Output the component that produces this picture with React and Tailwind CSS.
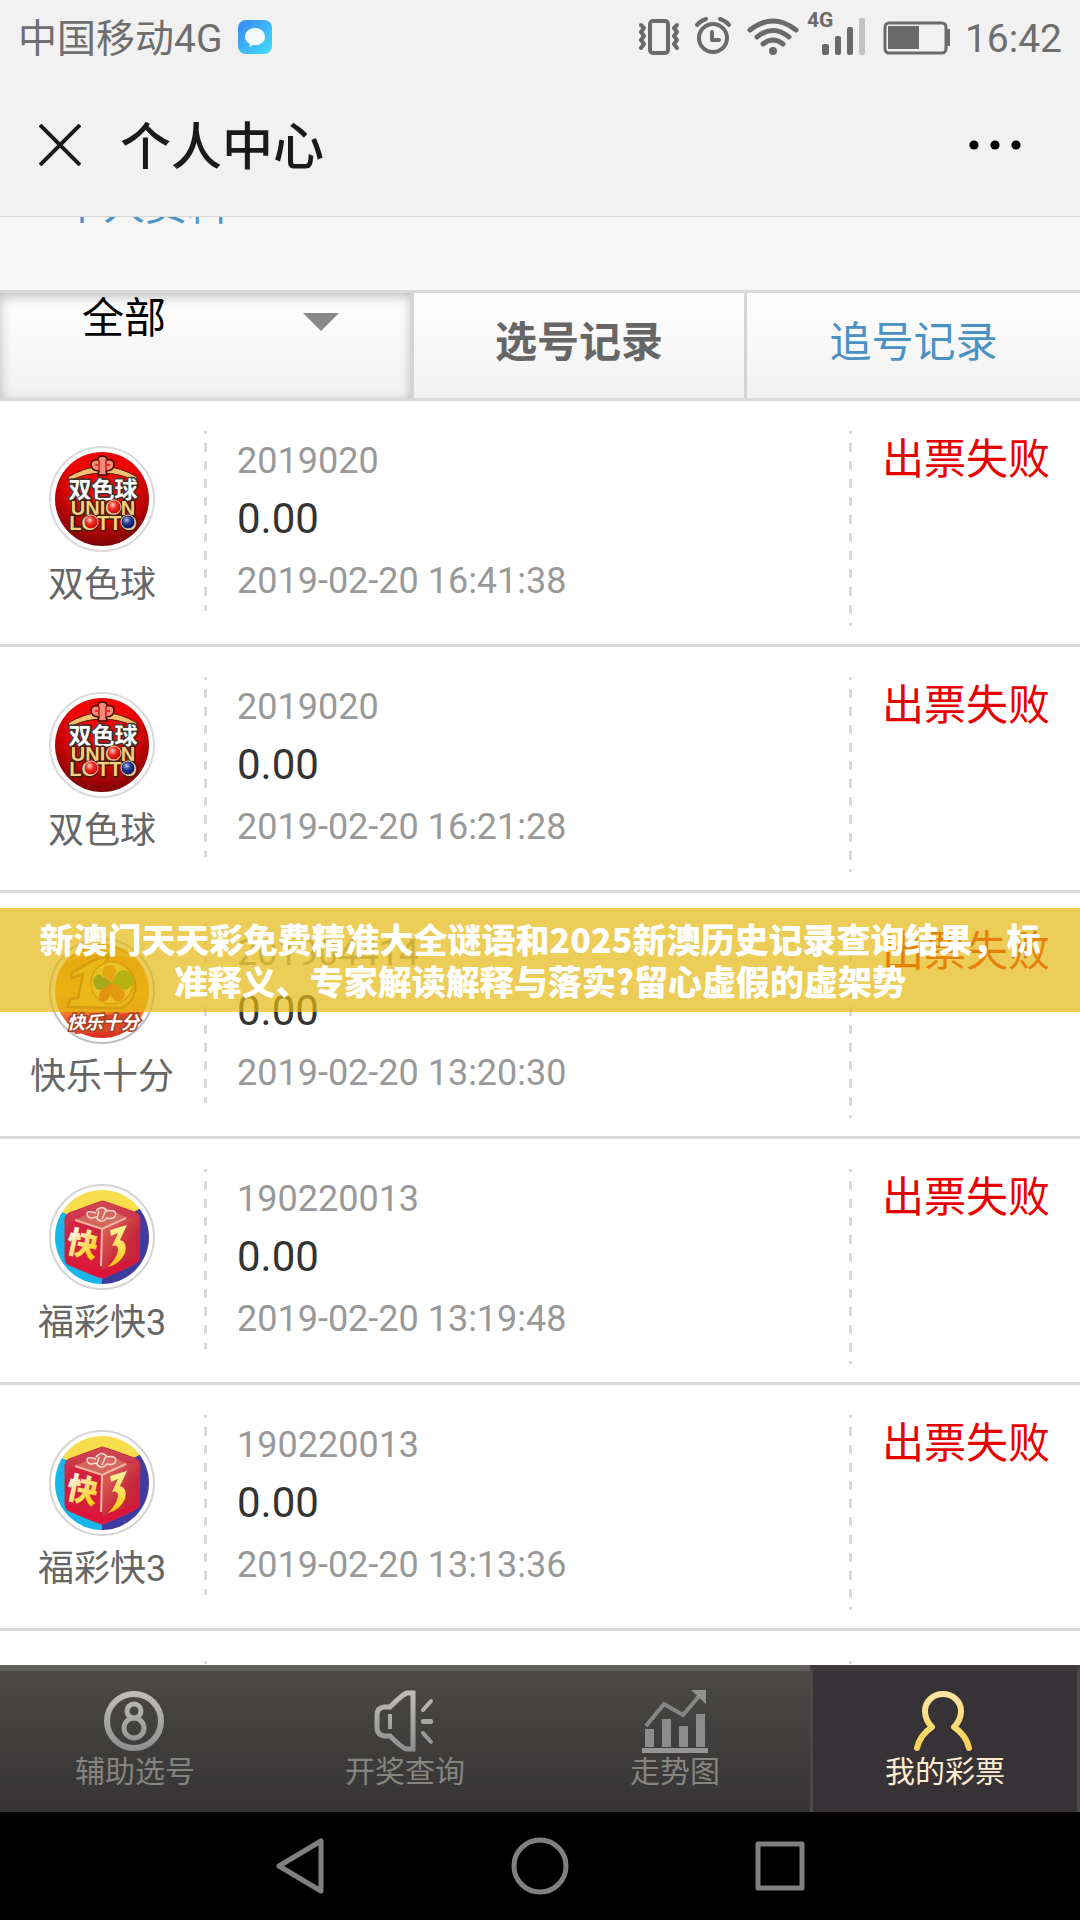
import { useState } from 'react'

const records = [
  { id: 1, game: 'ssq', issue: '2019020', amount: '0.00', time: '2019-02-20 16:41:38', status: '出票失败' },
  { id: 2, game: 'ssq', issue: '2019020', amount: '0.00', time: '2019-02-20 16:21:28', status: '出票失败' },
  { id: 3, game: 'klsf', issue: '201904414', amount: '0.00', time: '2019-02-20 13:20:30', status: '出票失败' },
  { id: 4, game: 'k3', issue: '190220013', amount: '0.00', time: '2019-02-20 13:19:48', status: '出票失败' },
  { id: 5, game: 'k3', issue: '190220013', amount: '0.00', time: '2019-02-20 13:13:36', status: '出票失败' },
]

const games = {
  ssq: { name: '双色球', Logo: UnionLottoLogo },
  klsf: { name: '快乐十分', Logo: HappyTenLogo },
  k3: { name: '福彩快3', Logo: FastThreeLogo },
}

const tabs = [
  { label: '辅助选号', Icon: BallIcon },
  { label: '开奖查询', Icon: SpeakerIcon },
  { label: '走势图', Icon: ChartIcon },
  { label: '我的彩票', Icon: UserIcon },
]

function UnionLottoLogo() {
  return (
    <svg viewBox="0 0 106 106" className="size-[106px]" aria-hidden="true">
      <defs>
        <radialGradient id="ssq-bg" cx="50%" cy="30%" r="75%">
          <stop offset="0.45" stopColor="#ee0505" />
          <stop offset="1" stopColor="#6d0508" />
        </radialGradient>
        <radialGradient id="ssq-red" cx="40%" cy="35%" r="60%">
          <stop offset="0" stopColor="#ffd0c8" />
          <stop offset="0.5" stopColor="#ef2a20" />
          <stop offset="1" stopColor="#c40d0d" />
        </radialGradient>
        <radialGradient id="ssq-blue" cx="40%" cy="35%" r="60%">
          <stop offset="0" stopColor="#b9c4f2" />
          <stop offset="0.5" stopColor="#1f3690" />
          <stop offset="1" stopColor="#0d1d66" />
        </radialGradient>
      </defs>
      <circle cx="53" cy="53" r="52" fill="#fff" stroke="#dcdada" strokeWidth="2" />
      <circle cx="53" cy="53" r="47" fill="url(#ssq-bg)" />
      <path d="M19 31 Q36 21 53 20 Q72 21 88 31 L87 35 Q70 27 53 27 Q37 27 20 35Z" fill="#f3c070" stroke="#5b1608" strokeWidth="1" />
      <path d="M49 29 L50 25 Q42 25 42 18 Q43 13 49 14 Q49 10 53 10 Q58 10 58 14 Q65 13 65 18 Q65 25 57 25 L58 29Z" fill="#f58a78" stroke="#3d0805" strokeWidth="1.5" />
      <path d="M50 14 V25 M57 14 V25 M46 19 H49 M58 19 H61" stroke="#d01818" strokeWidth="1.5" />
      <g paintOrder="stroke" strokeLinejoin="round" textAnchor="middle" fontWeight="700">
        <text x="54" y="52" fontSize="23" fill="#fff" stroke="#3c3634" strokeWidth="3" fontFamily="'Noto Sans CJK SC', sans-serif">双色球</text>
        <g fontFamily="'Liberation Sans', sans-serif" fill="#f5cf80" stroke="#43200f" strokeWidth="3">
          <text x="54" y="69" fontSize="20">UNION</text>
          <text x="54" y="84" fontSize="20">LOTTO</text>
        </g>
      </g>
      <circle cx="65" cy="61" r="7" fill="url(#ssq-red)" stroke="#f3c9a0" strokeWidth="1" />
      <circle cx="42" cy="76" r="7" fill="url(#ssq-red)" stroke="#f3c9a0" strokeWidth="1" />
      <circle cx="79" cy="76" r="7" fill="url(#ssq-blue)" stroke="#e8c9a8" strokeWidth="1" />
    </svg>
  )
}

function HappyTenLogo() {
  return (
    <svg viewBox="0 0 106 106" className="size-[106px]" aria-hidden="true">
      <defs>
        <linearGradient id="klsf-bg" x1="0" y1="0" x2="0" y2="1">
          <stop offset="0" stopColor="#ee7a10" />
          <stop offset="0.5" stopColor="#f9a01a" />
          <stop offset="0.74" stopColor="#ee8024" />
          <stop offset="0.76" stopColor="#ee6a3a" />
          <stop offset="1" stopColor="#dc2a20" />
        </linearGradient>
      </defs>
      <circle cx="53" cy="53" r="52" fill="#fff" stroke="#bcc0c4" strokeWidth="2" />
      <circle cx="53" cy="53" r="47" fill="url(#klsf-bg)" />
      <path d="M17 24 Q53 -6 89 24 Q53 8 17 24Z" fill="#f8c76a" opacity="0.7" />
      <path d="M22 35 L45 22 L61 17 L48 37 Q60 25 74 28 Q88 36 86 53 Q82 68 70 70 L19 69 L21 61 L29 60 L34 36 L23 40Z" fill="#fcb52c" stroke="#b75a08" strokeWidth="2.5" />
      <circle cx="63" cy="45" r="21" fill="#fcd75c" stroke="#c86f10" strokeWidth="1.5" />
      <path d="M63 45 Q49 38 55 29 Q66 23 67 34Z" fill="#ef7d15" />
      <path d="M63 45 Q70 26 81 35 Q90 46 76 52Z" fill="#4fa51c" />
      <path d="M63 45 Q79 50 75 60 Q66 69 61 55Z" fill="#e8590c" />
      <path d="M63 45 Q58 55 47 51 Q40 40 50 36Z" fill="#158a3c" />
      <path d="M63 45 Q62 67 51 63 Q46 52 63 45Z" fill="#dd3f14" />
      <path d="M19 80 L91 74 L82 92 L26 96Z" fill="#d9482b" />
      <text x="54" y="91" fontSize="18" fontWeight="700" fontStyle="italic" textAnchor="middle" fill="#fff" stroke="#a8401f" strokeWidth="3" paintOrder="stroke" fontFamily="'Noto Sans CJK SC', sans-serif">快乐十分</text>
    </svg>
  )
}

function FastThreeLogo() {
  return (
    <svg viewBox="0 0 106 106" className="size-[106px]" aria-hidden="true">
      <defs>
        <clipPath id="k3-clip">
          <circle cx="53" cy="53" r="47" />
        </clipPath>
        <linearGradient id="k3-face" x1="0" y1="0" x2="0" y2="1">
          <stop offset="0" stopColor="#cf4a55" />
          <stop offset="0.45" stopColor="#c92040" />
          <stop offset="1" stopColor="#e01238" />
        </linearGradient>
        <linearGradient id="k3-side" x1="0" y1="0" x2="1" y2="1">
          <stop offset="0" stopColor="#eb8067" />
          <stop offset="0.6" stopColor="#c4303c" />
          <stop offset="1" stopColor="#c4203a" />
        </linearGradient>
        <linearGradient id="k3-gold" x1="0" y1="0" x2="0" y2="1">
          <stop offset="0" stopColor="#fff6a0" />
          <stop offset="1" stopColor="#ffc70a" />
        </linearGradient>
        <linearGradient id="k3-text" x1="0" y1="0" x2="1" y2="1">
          <stop offset="0.2" stopColor="#fff0e8" />
          <stop offset="0.8" stopColor="#ffd21a" />
        </linearGradient>
      </defs>
      <circle cx="53" cy="53" r="52" fill="#fff" stroke="#d6d3d4" strokeWidth="2" />
      <g clipPath="url(#k3-clip)">
        <path d="M0 0 H106 V18 L53 46 L0 22Z" fill="#f8dd4c" />
        <path d="M0 22 L53 46 L53 106 L0 106Z" fill="#18b5ec" />
        <path d="M53 46 L106 16 L106 106 L53 106Z" fill="#3f3c9f" />
      </g>
      <path d="M53 17 Q55 17 88 29 Q91 31 91 35 L90 76 Q89 80 54 94 Q52 95 18 80 Q16 78 16 74 L16 35 Q16 31 20 29Z" fill="url(#k3-face)" stroke="#cf2740" strokeWidth="1" />
      <path d="M26 36 L55 23 L77 33 L53 45Z" fill="#d4685f" />
      <path d="M26 36 L53 45 L52 86 Q20 78 18 72 L20 37Z" fill="#d91f3c" opacity="0.6" />
      <path d="M53 45 L77 33 L88 36 L87 74 L53 86Z" fill="url(#k3-side)" opacity="0.8" />
      <path d="M26 36 L53 45 L77 34 M53 45 L52 82" fill="none" stroke="#f9b7a4" strokeWidth="2" />
      <path d="M47 29 Q38 26 38 30 Q39 36 47 33 Q52 41 58 34 Q66 36 67 30 Q66 25 58 27 Q53 20 47 27 M50 27 L48 34 M57 26 L53 35" fill="none" stroke="#ffd7cd" strokeWidth="1.5" />
      <text x="18" y="71" fontSize="31" fontWeight="900" fill="url(#k3-text)" transform="rotate(12 33 60)" fontFamily="'Noto Sans CJK SC', sans-serif">快</text>
      <path d="M61 46 L78 41 L71 56 Q79 58 76 69 Q71 80 59 83 Q68 74 69 66 Q69 60 63 62 L69 49 L62 52Z" fill="url(#k3-gold)" />
    </svg>
  )
}

function BallIcon() {
  return (
    <svg viewBox="1 0 66 64" className="h-16 w-[66px]" fill="none" stroke="url(#metal)" aria-hidden="true">
      <circle cx="33" cy="32" r="27" strokeWidth="6" />
      <circle cx="33" cy="22" r="7" strokeWidth="5" />
      <circle cx="33" cy="39" r="10" strokeWidth="5" />
    </svg>
  )
}

function SpeakerIcon() {
  return (
    <svg viewBox="2 0 66 64" className="h-16 w-[66px]" fill="none" stroke="url(#metal)" strokeWidth="5" aria-hidden="true">
      <path d="M43 4 H37 Q33 5 20 18 H14 Q7 19 7 26 V38 Q7 46 14 47 H20 Q33 60 37 60 H43Z" />
      <path d="M20 25 V40" strokeWidth="4" />
      <path d="M53 21 L61 12 M53 44 L61 53" strokeWidth="4" strokeLinecap="round" />
      <path d="M53 32 H61 V33 H53Z" strokeWidth="4" strokeLinejoin="round" />
    </svg>
  )
}

function ChartIcon() {
  return (
    <svg viewBox="0 0 66 64" className="h-16 w-[66px]" aria-hidden="true">
      <path d="M4 37 L22 15 L41 26 L58 6" fill="none" stroke="#868686" strokeWidth="4" />
      <path d="M49 1 H64 V15Z" fill="#929292" />
      <path d="M3 40 h9 v18 h-9Z M20 30 h9 v28 h-9Z M37 37 h9 v21 h-9Z M54 25 h9 v33 h-9Z" fill="#8c8c8c" />
      <path d="M0 59 H66 V64 H0Z" fill="#969696" />
    </svg>
  )
}

function UserIcon() {
  return (
    <svg viewBox="2 0 66 64" className="h-16 w-[66px]" aria-hidden="true">
      <path d="M7 59 Q10 46 22 38 Q15 31 15 22 A18 17 0 0 1 51 22 Q51 31 44 38 Q56 46 59 59" fill="none" stroke="url(#gold)" strokeWidth="6" strokeLinecap="round" strokeLinejoin="round" />
    </svg>
  )
}

function StatusBar() {
  return (
    <div className="flex h-[74px] items-center px-[18px] text-[39px] leading-none text-[#6e6e6e]">
      <span className="pt-1">中国移动4G</span>
      <svg viewBox="0 0 34 34" className="ml-4 size-[34px]" aria-hidden="true">
        <defs>
          <linearGradient id="msg" x1="0" y1="0" x2="1" y2="1">
            <stop offset="0" stopColor="#3b86f5" />
            <stop offset="1" stopColor="#3fe0fc" />
          </linearGradient>
        </defs>
        <rect width="34" height="34" rx="8" fill="url(#msg)" />
        <path d="M17 8 C11 8 7 12 7 17 C7 20 9 22.500 12 24 Q12 26 11 27 Q14 26 15 25 C22 26 27 22 27 17 C27 12 23 8 17 8Z" fill="#f4fbff" />
      </svg>
      <svg viewBox="0 -6 312 60" className="ml-auto h-[60px] w-[312px]" fill="none" stroke="#6a6a6a" aria-hidden="true">
        {/* vibrate */}
        <rect x="11" y="8" width="18" height="32" rx="3" strokeWidth="4" />
        <path d="M2 12 l3 3 l-3 4 l3 4 l-3 4 l3 4 l-3 4 M38 12 l-3 3 l3 4 l-3 4 l3 4 l-3 4 l3 4" strokeWidth="4" strokeLinejoin="round" strokeLinecap="round" />
        {/* alarm */}
        <circle cx="74" cy="25" r="14" strokeWidth="4" />
        <path d="M73 19 V27 H80" strokeWidth="4" strokeLinejoin="round" strokeLinecap="round" />
        <path d="M58 12 Q61 8 67 6 M90 12 Q87 8 81 6" strokeWidth="4" strokeLinecap="round" />
        {/* wifi */}
        <path d="M111 17 Q134 -1 157 17 M118 24 Q134 11 150 24 M124 31 Q134 23 144 31" strokeWidth="5" strokeLinecap="round" />
        <circle cx="134" cy="38" r="4" fill="#6a6a6a" stroke="none" />
        {/* signal */}
        <g fill="#6a6a6a" stroke="none">
          <text x="168" y="14" fontSize="21" fontWeight="700" fontFamily="Roboto, sans-serif">4G</text>
          <rect x="183" y="31" width="7" height="11" rx="2" />
          <rect x="196" y="23" width="6" height="19" rx="2" />
          <rect x="208" y="14" width="6" height="28" rx="2" />
          <rect x="220" y="5" width="6" height="37" rx="2" fill="#c2c2c2" />
        </g>
        {/* battery */}
        <rect x="246" y="10" width="61" height="30" rx="4" strokeWidth="3" />
        <path d="M249 13 H280 V36 H249Z M308 16 H311 V33 H308Z" fill="#6a6a6a" stroke="none" />
      </svg>
      <span className="ml-[14px] pt-1">16:42</span>
    </div>
  )
}

function Header() {
  return (
    <header className="shrink-0 border-b border-[#d8d8d8] bg-[#f1f1f1]">
      <StatusBar />
      <div className="flex h-[142px] items-center px-[39px]">
        <button type="button" aria-label="关闭">
          <svg viewBox="0 0 42 42" className="size-[42px]" fill="none" stroke="#1a1a1a" strokeWidth="4" aria-hidden="true">
            <path d="M1 1 L41 41 M41 1 L1 41" />
          </svg>
        </button>
        <h1 className="ml-[39px] pt-1 text-[51px] leading-none font-medium text-[#1a1a1a]">个人中心</h1>
        <button type="button" aria-label="更多" className="ml-auto pr-5">
          <svg viewBox="0 0 52 10" className="h-[10px] w-[52px]" fill="#000" aria-hidden="true">
            <circle cx="5" cy="5" r="4.600" />
            <circle cx="26" cy="5" r="4.600" />
            <circle cx="47" cy="5" r="4.600" />
          </svg>
        </button>
      </div>
    </header>
  )
}

function FilterBar() {
  const [kind, setKind] = useState('all')

  return (
    <div className="grid h-[111px] grid-cols-[414px_1fr_1fr] border-y-3 border-[#d9d9d9] bg-linear-to-b from-white to-[#f1f1f1] text-[42px]">
      <div className="relative border-r-3 border-[#d4d4d4] shadow-[inset_0_4px_12px_rgba(0,0,0,0.25)]">
        <select
          aria-label="彩种"
          value={kind}
          onChange={(e) => setKind(e.target.value)}
          className="block h-[52px] w-full appearance-none bg-transparent pl-[82px] leading-[52px] text-black outline-none"
        >
          <option value="all">全部</option>
        </select>
        <svg viewBox="0 0 36 18" className="pointer-events-none absolute top-5 right-[72px] h-[18px] w-9" aria-hidden="true">
          <path d="M0 0 H36 L18 18Z" fill="#888" />
        </svg>
      </div>
      <button type="button" className="border-r-3 border-[#d4d4d4] pb-1.5 font-bold text-[#666]">选号记录</button>
      <a href="#chase" className="flex items-center justify-center pb-1.5 text-[#4a92c4]">追号记录</a>
    </div>
  )
}

function Dashes({ className }) {
  return (
    <div className={`mt-[30px] w-[3px] shrink-0 bg-[repeating-linear-gradient(to_bottom,#d9d9d9_0_3px,transparent_3px_12px,#d9d9d9_12px_18px)] ${className}`} />
  )
}

function RecordRow({ record }) {
  const game = record && games[record.game]

  return (
    <li className="flex h-[246px] border-b-3 border-[#d9d9d9]">
      <div className="flex w-[204px] shrink-0 flex-col items-center pt-[45px]">
        {game && (
          <>
            <game.Logo />
            <span className="mt-[9px] text-[36px] leading-[48px] text-[#666]">{game.name}</span>
          </>
        )}
      </div>
      <Dashes className="h-[180px]" />
      <div className="min-w-0 flex-1 pt-9 pl-[30px] text-[36px] leading-[48px] text-[#999]">
        {record && (
          <>
            <p>{record.issue}</p>
            <p className="mt-1 text-[42px] leading-[60px] text-[#333]">{record.amount}</p>
            <p className="mt-2">{record.time}</p>
          </>
        )}
      </div>
      <Dashes className="h-[195px]" />
      <div className="w-[228px] shrink-0 pt-[29px] pl-[30px] text-[42px] leading-[60px] text-[#e80000]">
        {record && record.status}
      </div>
    </li>
  )
}

function TabBar() {
  const [active, setActive] = useState('我的彩票')

  return (
    <nav className="grid h-[147px] shrink-0 grid-cols-4 bg-linear-to-b from-[#4c4b47] to-[#353334]">
      <svg className="absolute size-0" aria-hidden="true">
        <defs>
          <linearGradient id="metal" gradientUnits="userSpaceOnUse" x1="0" y1="0" x2="0" y2="64">
            <stop offset="0" stopColor="#c2c0bc" />
            <stop offset="1" stopColor="#8b8d8c" />
          </linearGradient>
          <linearGradient id="gold" gradientUnits="userSpaceOnUse" x1="0" y1="0" x2="0" y2="64">
            <stop offset="0" stopColor="#ffe9a8" />
            <stop offset="1" stopColor="#f8cf4b" />
          </linearGradient>
        </defs>
      </svg>
      {tabs.map(({ label, Icon }) => (
        <button
          key={label}
          type="button"
          onClick={() => setActive(label)}
          className={
            label === active
              ? 'flex flex-col items-center border-x-3 border-t-6 border-x-[#4b484a] border-t-[#3f3a3d] bg-[#373235] pt-[18px] text-[30px] leading-[38px] text-[#fdecce]'
              : 'flex flex-col items-center border-t-6 border-[#605f5c] pt-[18px] text-[30px] leading-[38px] text-[#858580]'
          }
        >
          <Icon />
          <span>{label}</span>
        </button>
      ))}
    </nav>
  )
}

function SystemKeys() {
  return (
    <div className="flex h-[108px] shrink-0 items-center justify-center bg-black">
      <button type="button" aria-label="返回" className="flex w-60 justify-center">
        <svg viewBox="0 0 60 60" className="size-[60px]" fill="none" stroke="#808080" strokeWidth="5" strokeLinejoin="round" aria-hidden="true">
          <path d="M9 30 L51 5 V55Z" />
        </svg>
      </button>
      <button type="button" aria-label="主页" className="flex w-60 justify-center">
        <svg viewBox="0 0 60 60" className="size-[60px]" fill="none" stroke="#808080" strokeWidth="5" aria-hidden="true">
          <circle cx="30" cy="30" r="26" />
        </svg>
      </button>
      <button type="button" aria-label="最近任务" className="flex w-60 justify-center">
        <svg viewBox="0 0 60 60" className="size-[60px]" fill="none" stroke="#808080" strokeWidth="5" strokeLinejoin="round" aria-hidden="true">
          <path d="M8 8 H52 V52 H8Z" />
        </svg>
      </button>
    </div>
  )
}

export default function App() {
  return (
    <div className="relative flex h-screen flex-col overflow-hidden bg-white font-[Roboto,'Noto_Sans_CJK_SC',sans-serif]">
      <Header />
      <main className="min-h-0 flex-1 overflow-hidden">
        <div className="-mt-[41px] h-[114px] bg-[#f6f6f6] px-[61px]">
          <a href="#profile" className="text-[42px] leading-[60px] text-[#4a92c4]">个人资料</a>
        </div>
        <FilterBar />
        <ul>
          {records.map((r) => (
            <RecordRow key={r.id} record={r} />
          ))}
          <RecordRow />
        </ul>
      </main>
      <TabBar />
      <SystemKeys />
      <p className="absolute inset-x-0 top-1/2 -translate-y-1/2 bg-[rgba(226,184,16,0.7)] px-[30px] py-[10px] text-center font-['Noto_Sans_CJK_SC',sans-serif] text-[34px] leading-[42px] font-black text-white">
        新澳门天天彩免费精准大全谜语和2025新澳历史记录查询结果，标准释义、专家解读解释与落实?留心虚假的虚架势
      </p>
    </div>
  )
}
